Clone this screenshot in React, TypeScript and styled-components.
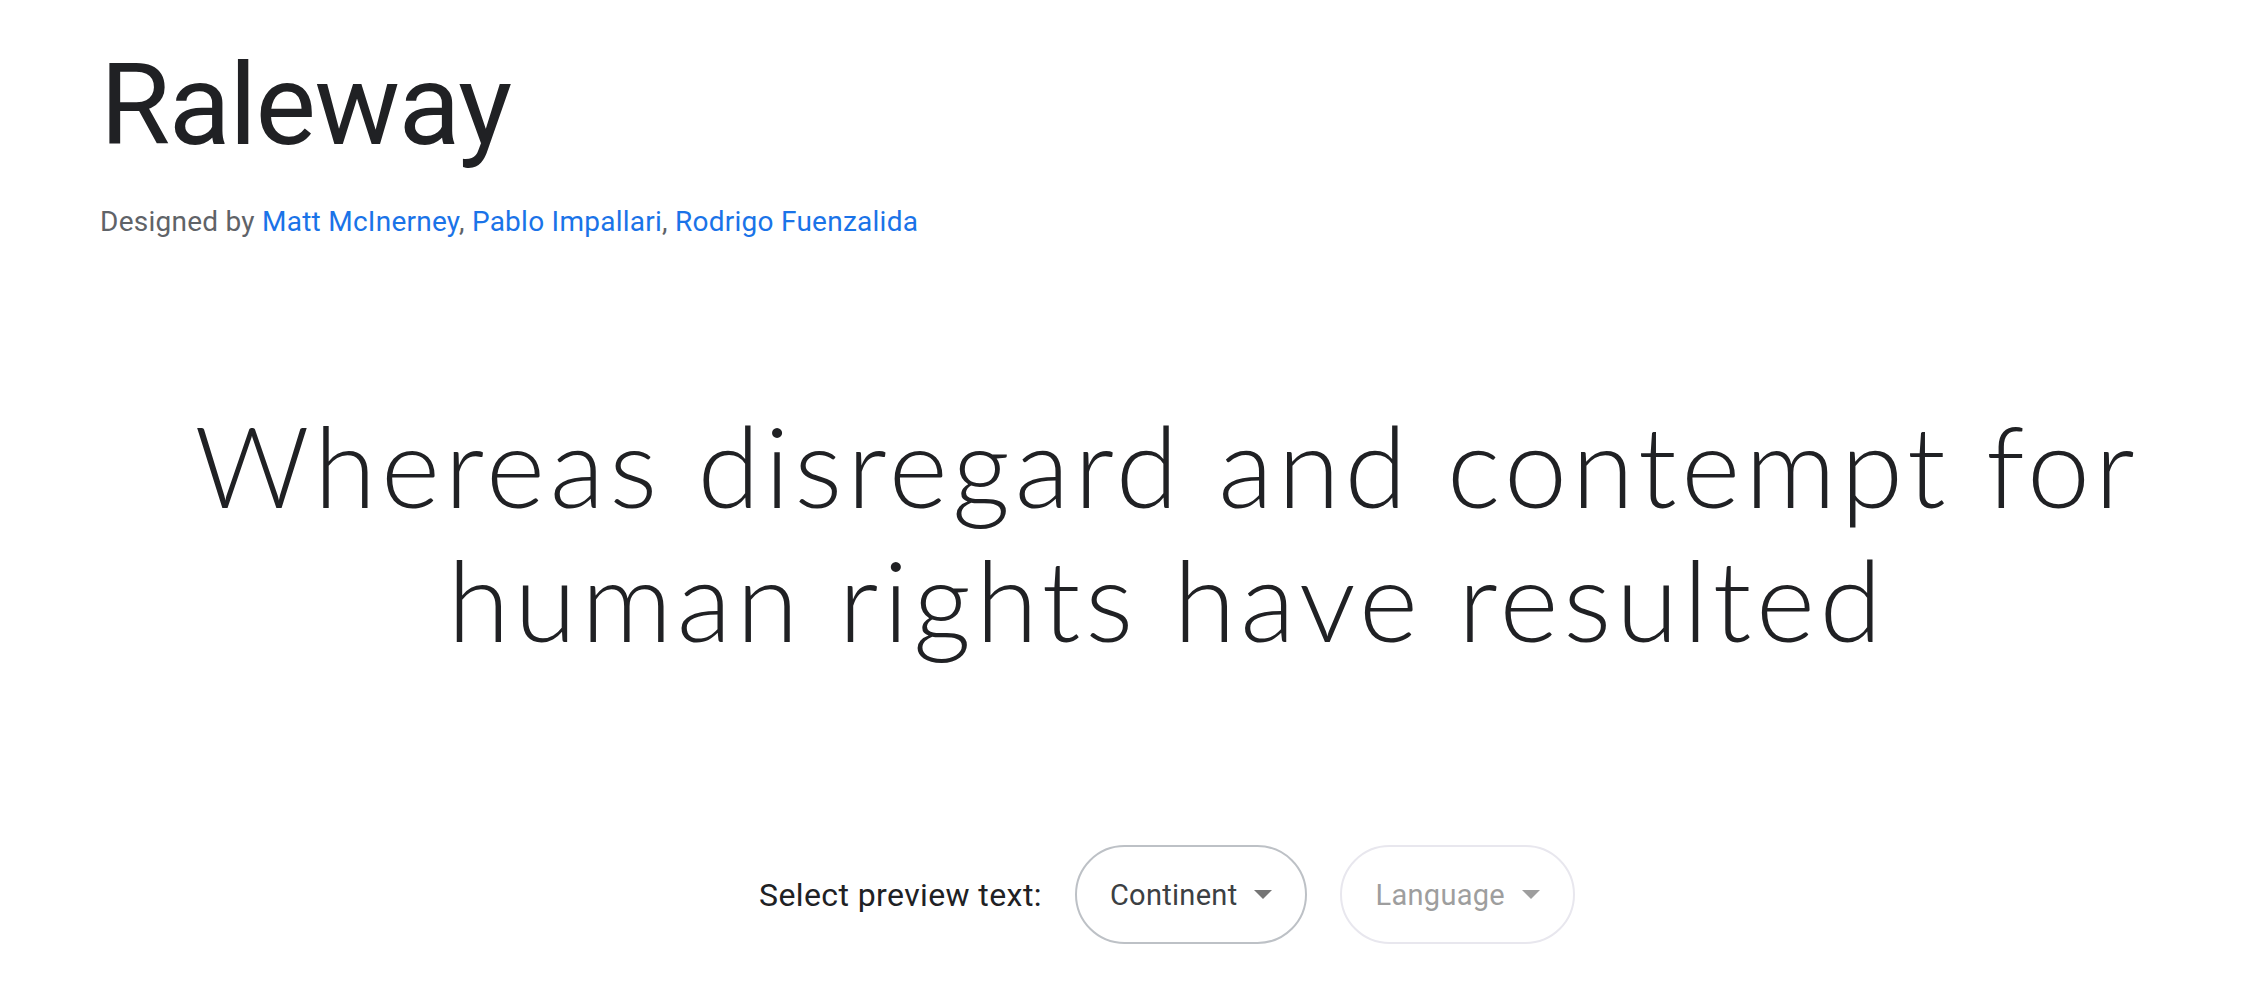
import React from 'react';
import styled, { createGlobalStyle } from 'styled-components';

const GlobalStyle = createGlobalStyle`
    html, body {
        margin: 0;
        padding: 0;
        background: #ffffff;
    }
    body {
        font-family: Roboto, "Liberation Sans", Arial, sans-serif;
        color: #202124;
    }
`

const Page = styled.main`
    padding: 48px 32px 0 100px;
`

const Title = styled.h1`
    margin: 0;
    font-family: Roboto, "Liberation Sans", sans-serif;
    font-size: 114px;
    font-weight: 400;
    line-height: 114px;
    letter-spacing: -1.5px;
    color: #202124;
`

const Designers = styled.p`
    margin: 42px 0 0;
    font-size: 28px;
    line-height: 36px;
    letter-spacing: 0.25px;
    color: #5f6368;
`

const DesignerLink = styled.a`
    color: #1a73e8;
    text-decoration: none;
`

const Preview = styled.p`
    margin: 157px 0 0;
    font-family: Lato, "Open Sans", sans-serif;
    font-weight: 300;
    font-size: 113px;
    line-height: 134px;
    letter-spacing: 4.75px;
    text-align: center;
    color: #202124;
`

const Controls = styled.div`
    margin-top: 180px;
    display: flex;
    align-items: center;
    justify-content: center;
    gap: 33px;
`

const Label = styled.span`
    font-size: 32px;
    letter-spacing: 0.4px;
    color: #202124;
`

const Select = styled.button<{ $disabled?: boolean }>`
    display: flex;
    align-items: center;
    gap: 17px;
    height: 99px;
    padding: 0 33px;
    border-radius: 50px;
    background: #ffffff;
    border: 2px solid ${p => (p.$disabled ? '#e8e7ee' : '#bdc1c6')};
    font-family: Roboto, "Liberation Sans", sans-serif;
    font-size: 29px;
    letter-spacing: 0.3px;
    color: ${p => (p.$disabled ? '#9e9e9e' : '#3c4043')};
    cursor: ${p => (p.$disabled ? 'default' : 'pointer')};

    & > svg {
        fill: ${p => (p.$disabled ? '#9e9e9e' : '#757575')};
    }
`

const designers = ['Matt McInerney', 'Pablo Impallari', 'Rodrigo Fuenzalida']

const Caret = () => (
    <svg width="18" height="9" viewBox="0 0 18 9">
        <polygon points="0,0 18,0 9,9" />
    </svg>
)

function App() {
    return (
        <>
            <GlobalStyle />
            <Page>
                <Title>Raleway</Title>
                <Designers>
                    Designed by{' '}
                    {designers.map((name, i) => (
                        <React.Fragment key={name}>
                            <DesignerLink href="#">{name}</DesignerLink>
                            {i < designers.length - 1 ? ', ' : ''}
                        </React.Fragment>
                    ))}
                </Designers>
                <Preview>
                    Whereas disregard and contempt for
                    <br />
                    human rights have resulted
                </Preview>
                <Controls>
                    <Label>Select preview text:</Label>
                    <Select>
                        Continent
                        <Caret />
                    </Select>
                    <Select $disabled>
                        Language
                        <Caret />
                    </Select>
                </Controls>
            </Page>
        </>
    );
}

export default App;
